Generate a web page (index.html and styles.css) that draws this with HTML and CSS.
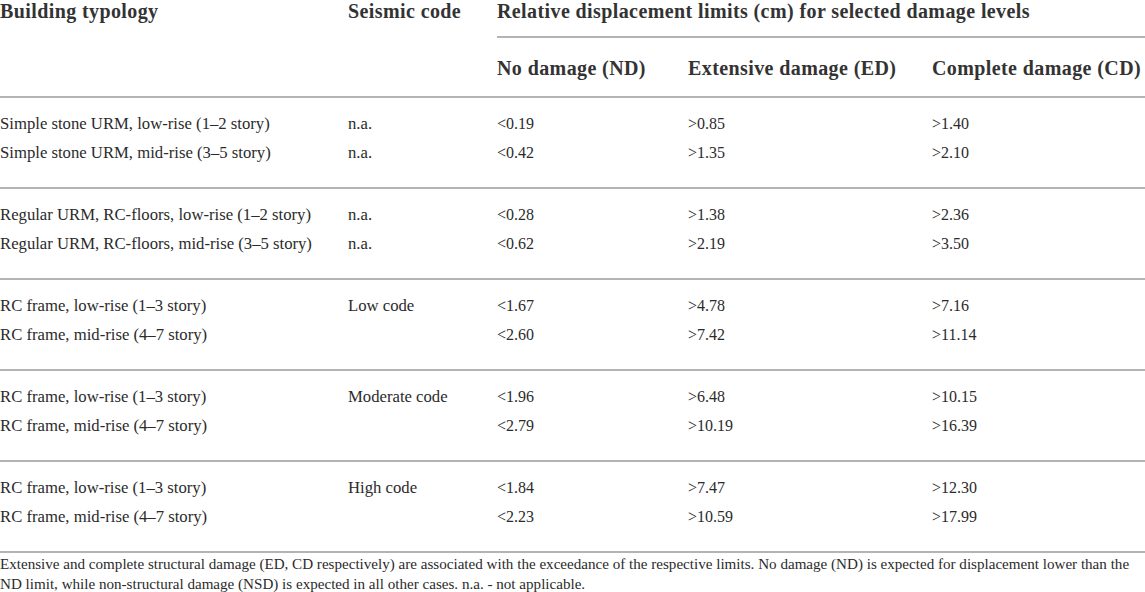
FILE: index.html
```html
<!DOCTYPE html>
<html lang="en">
  <head>
    <meta charset="UTF-8">
    <meta name="viewport" content="width=device-width">
    <title>Relative displacement limits</title>
    <link rel="stylesheet" href="styles.css">
  </head>
  <body>
    <table class="limits">
      <colgroup>
        <col class="c-type">
        <col class="c-code">
        <col class="c-nd">
        <col class="c-ed">
        <col class="c-cd">
      </colgroup>
      <thead>
        <tr class="head-top">
          <th rowspan="2">Building typology</th>
          <th rowspan="2">Seismic code</th>
          <th colspan="3" class="span">Relative displacement limits (cm) for selected damage levels</th>
        </tr>
        <tr class="head-sub">
          <th>No damage (ND)</th>
          <th>Extensive damage (ED)</th>
          <th>Complete damage (CD)</th>
        </tr>
      </thead>
      <tbody>
        <tr>
          <td>Simple stone URM, low-rise (1–2 story)</td>
          <td>n.a.</td>
          <td class="num">&lt;0.19</td>
          <td class="num">&gt;0.85</td>
          <td class="num">&gt;1.40</td>
        </tr>
        <tr>
          <td>Simple stone URM, mid-rise (3–5 story)</td>
          <td>n.a.</td>
          <td class="num">&lt;0.42</td>
          <td class="num">&gt;1.35</td>
          <td class="num">&gt;2.10</td>
        </tr>
      </tbody>
      <tbody>
        <tr>
          <td>Regular URM, RC-floors, low-rise (1–2 story)</td>
          <td>n.a.</td>
          <td class="num">&lt;0.28</td>
          <td class="num">&gt;1.38</td>
          <td class="num">&gt;2.36</td>
        </tr>
        <tr>
          <td>Regular URM, RC-floors, mid-rise (3–5 story)</td>
          <td>n.a.</td>
          <td class="num">&lt;0.62</td>
          <td class="num">&gt;2.19</td>
          <td class="num">&gt;3.50</td>
        </tr>
      </tbody>
      <tbody>
        <tr>
          <td>RC frame, low-rise (1–3 story)</td>
          <td>Low code</td>
          <td class="num">&lt;1.67</td>
          <td class="num">&gt;4.78</td>
          <td class="num">&gt;7.16</td>
        </tr>
        <tr>
          <td>RC frame, mid-rise (4–7 story)</td>
          <td></td>
          <td class="num">&lt;2.60</td>
          <td class="num">&gt;7.42</td>
          <td class="num">&gt;11.14</td>
        </tr>
      </tbody>
      <tbody>
        <tr>
          <td>RC frame, low-rise (1–3 story)</td>
          <td>Moderate code</td>
          <td class="num">&lt;1.96</td>
          <td class="num">&gt;6.48</td>
          <td class="num">&gt;10.15</td>
        </tr>
        <tr>
          <td>RC frame, mid-rise (4–7 story)</td>
          <td></td>
          <td class="num">&lt;2.79</td>
          <td class="num">&gt;10.19</td>
          <td class="num">&gt;16.39</td>
        </tr>
      </tbody>
      <tbody>
        <tr>
          <td>RC frame, low-rise (1–3 story)</td>
          <td>High code</td>
          <td class="num">&lt;1.84</td>
          <td class="num">&gt;7.47</td>
          <td class="num">&gt;12.30</td>
        </tr>
        <tr>
          <td>RC frame, mid-rise (4–7 story)</td>
          <td></td>
          <td class="num">&lt;2.23</td>
          <td class="num">&gt;10.59</td>
          <td class="num">&gt;17.99</td>
        </tr>
      </tbody>
    </table>
    <p class="note">Extensive and complete structural damage (ED, CD respectively) are associated with the exceedance of the respective limits. No damage (ND) is expected for displacement lower than the ND limit, while non-structural damage (NSD) is expected in all other cases. n.a. - not applicable.</p>
  </body>
</html>
```

FILE: styles.css
```css
html {
  font-family: "Liberation Serif", "DejaVu Serif", serif;
  color: #2b2b2b;
  background: #fff;
}
body {
  margin: 0;
}
.limits {
  width: 1145px;
  border-collapse: collapse;
  table-layout: fixed;
}
.c-type { width: 348px; }
.c-code { width: 149px; }
.c-nd { width: 191px; }
.c-ed { width: 244px; }
.c-cd { width: 213px; }

th, td {
  padding: 0;
  text-align: left;
  vertical-align: top;
  white-space: nowrap;
}
th {
  font-size: 20px;
  font-weight: bold;
  line-height: 22px;
  letter-spacing: 0.4px;
  color: #333;
}
.head-top th {
  padding-bottom: 14px;
}
.head-top .span {
  border-bottom: 2px solid #b4b4b4;
}
.head-sub th {
  padding-top: 19px;
  padding-bottom: 17px;
}
thead tr:last-child th,
thead th[rowspan] {
  border-bottom: 2px solid #b4b4b4;
}
td {
  font-size: 16.7px;
  line-height: 22px;
}
td.num {
  font-size: 16px;
}
tbody {
  border-bottom: 2px solid #b4b4b4;
}
tbody tr:first-child td {
  padding-top: 15px;
  padding-bottom: 3px;
}
tbody tr:last-child td {
  padding-top: 4px;
  padding-bottom: 23px;
}
.note {
  margin: 1px 0 0;
  font-size: 15.1px;
  line-height: 20px;
}
```
